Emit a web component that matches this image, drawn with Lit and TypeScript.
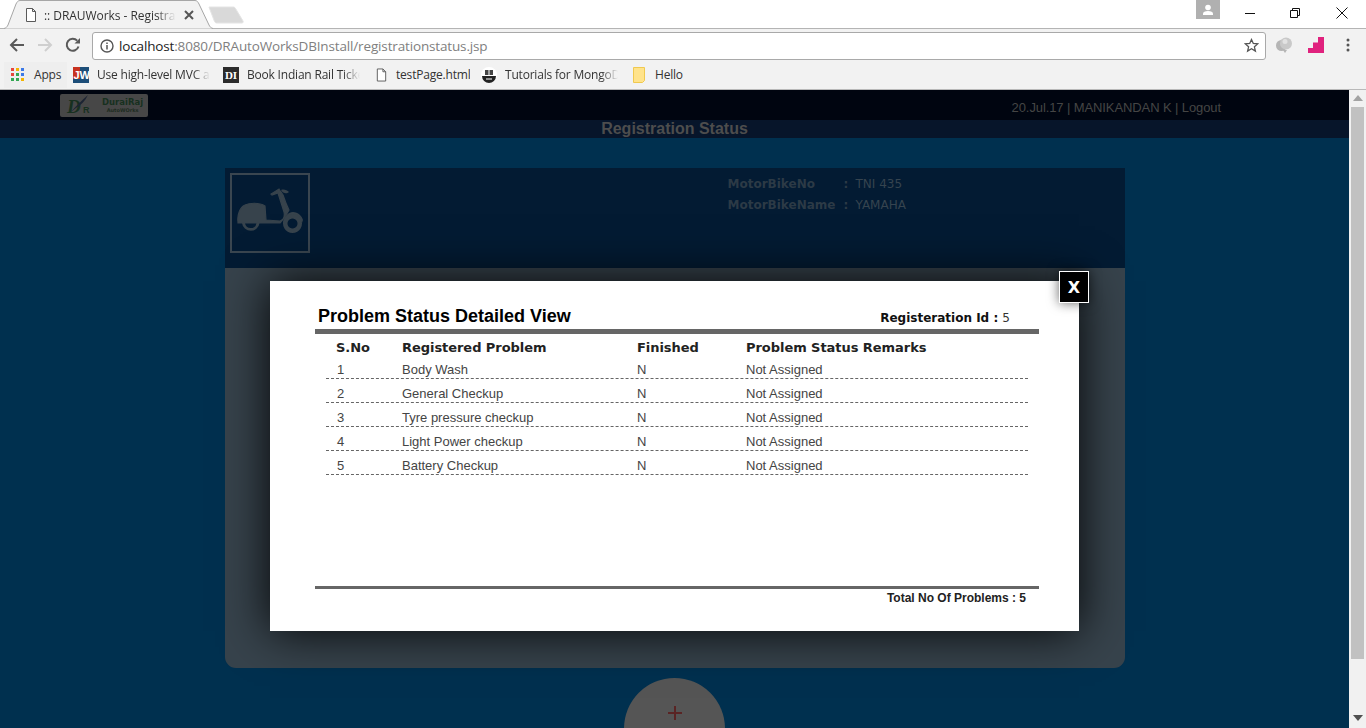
import { LitElement, css, html, svg } from "lit";
import { customElement } from "lit/decorators.js";

const problems = [
  "Body Wash",
  "General Checkup",
  "Tyre pressure checkup",
  "Light Power checkup",
  "Battery Checkup",
];

const docIcon = svg`<path d="M2.5 1.5h6l3 3v10h-9z M8.5 1.5v3h3" fill="#fff" stroke="#5a5a5a" stroke-width="1"/>`;

const appColors = ["#e8453c", "#f4b400", "#3b78e7", "#e8453c", "#34a853", "#3b78e7", "#34a853", "#34a853", "#f4b400"];

const bookmarks = [
  { label: "Use high-level MVC and", icon: "jw", width: 113, gap: 8, after: 13, fade: true },
  { label: "Book Indian Rail Tickets", icon: "di", width: 113, gap: 8, after: 15, fade: true },
  { label: "testPage.html", icon: "doc", width: 74, gap: 8, after: 11, fade: false },
  { label: "Tutorials for MongoDB", icon: "mongo", width: 113, gap: 8, after: 15, fade: true },
  { label: "Hello", icon: "note", width: 30, gap: 10, after: 0, fade: false },
];

@customElement("app-root")
export class AppRoot extends LitElement {
  static styles = css`
    :host {
      display: block;
      height: 728px;
      overflow: hidden;
      font-family: "Liberation Sans", Arial, sans-serif;
      position: relative;
    }
    svg {
      display: block;
      flex: none;
    }
    .tabstrip {
      height: 28px;
      background: #fff;
      border-bottom: 1px solid #b4b4b4;
      display: flex;
      position: relative;
      box-sizing: content-box;
    }
    .tab-bg {
      position: absolute;
      left: 0;
      top: 0;
    }
    .new-tab {
      position: absolute;
      left: 208px;
      top: 6px;
    }
    .tab {
      position: relative;
      display: flex;
      align-items: center;
      margin-left: 24px;
      width: 172px;
      height: 30px;
      font: 12px "Open Sans", sans-serif;
      letter-spacing: -0.05px;
      color: #333;
    }
    .tab-title {
      margin-left: 6px;
      width: 132px;
      overflow: hidden;
      white-space: nowrap;
      -webkit-mask-image: linear-gradient(90deg, #000 85%, transparent);
      mask-image: linear-gradient(90deg, #000 85%, transparent);
    }
    .tab-close {
      margin-left: 8px;
    }
    .win {
      position: absolute;
      right: 1px;
      top: 0;
      display: flex;
    }
    .avatar {
      position: absolute;
      left: 1196px;
      top: 0;
      width: 24px;
      height: 19px;
      background: #b0b0b0;
      display: flex;
      justify-content: center;
      align-items: center;
    }
    .win-btn {
      width: 46px;
      height: 26px;
      display: flex;
      align-items: center;
      justify-content: center;
    }
    .toolbar {
      height: 31px;
      background: #f2f2f2;
      display: flex;
      align-items: center;
      padding-left: 9px;
    }
    .nav {
      width: 28px;
      display: flex;
      justify-content: flex-start;
    }
    .omnibox {
      margin-left: -1px;
      width: 1172px;
      height: 26px;
      background: #fff;
      border: 1px solid #a9a9a9;
      border-radius: 3px;
      display: flex;
      align-items: center;
      font: 13.5px "Open Sans", sans-serif;
      letter-spacing: -0.15px;
      color: #808080;
      position: relative;
      top: 1px;
    }
    .omnibox .info {
      margin: 0 5px 0 7px;
    }
    .omnibox b {
      font-weight: 400;
      color: #222;
    }
    .omnibox .star {
      margin-left: auto;
      margin-right: 6px;
    }
    .exts {
      display: flex;
      align-items: center;
      margin-left: 9px;
    }
    .ext-pink {
      margin-left: 15px;
    }
    .ext-menu {
      margin-left: 22px;
    }
    .bookmarks {
      height: 29px;
      background: #f2f2f2;
      border-bottom: 1px solid #b9b9b9;
      display: flex;
      align-items: center;
      padding-left: 4px;
      font: 12px "Open Sans", sans-serif;
      letter-spacing: -0.2px;
      color: #333;
    }
    .bm-apps {
      width: 63px;
      height: 26px;
      box-sizing: border-box;
      background: #eeeeee;
      display: flex;
      align-items: center;
      padding-left: 7px;
      gap: 10px;
      margin-right: 6px;
    }
    .bm {
      display: flex;
      align-items: center;
    }
    .bm-label {
      overflow: hidden;
      white-space: nowrap;
    }
    .bm-label.fade {
      -webkit-mask-image: linear-gradient(90deg, #000 85%, transparent);
      mask-image: linear-gradient(90deg, #000 85%, transparent);
    }
    .page {
      height: 638px;
      display: flex;
      position: relative;
    }
    .main {
      flex: 1;
      background: #00304f;
      overflow: hidden;
    }
    .scrollbar {
      width: 17px;
      background: #f1f1f1;
      display: flex;
      flex-direction: column;
      align-items: center;
    }
    .scroll-up {
      margin-top: 5px;
    }
    .thumb {
      margin-top: 6px;
      width: 13px;
      height: 552px;
      background: #c1c1c1;
    }
    .scroll-down {
      margin-top: auto;
      margin-bottom: 7px;
    }
    .top {
      height: 30px;
      background: #000510;
      display: flex;
      align-items: flex-start;
      justify-content: space-between;
      padding: 0 128px 0 60px;
      font-size: 13px;
      letter-spacing: -0.1px;
      color: #454545;
    }
    .top-right {
      margin-top: 10px;
    }
    .logo {
      width: 88px;
      height: 23px;
      margin-top: 4px;
      box-sizing: border-box;
      background: #474747;
      border-radius: 2px;
      display: flex;
      align-items: center;
      color: #17301f;
      font-family: "DejaVu Sans", sans-serif;
      font-weight: 700;
      letter-spacing: 0;
    }
    .logo-text {
      margin-left: 12px;
      text-align: center;
      font-size: 8.5px;
      line-height: 10px;
    }
    .logo-text small {
      display: block;
      font-size: 5px;
      line-height: 7px;
      color: #1d2b20;
    }
    .subtitle {
      height: 18px;
      background: #07152a;
      display: flex;
      align-items: center;
      justify-content: center;
      font-size: 16px;
      font-weight: 700;
      color: #4d4d4d;
    }
    .card {
      width: 900px;
      margin: 30px auto 0;
      height: 500px;
      background: #37434c;
      border-radius: 0 0 11px 11px;
    }
    .card-top {
      height: 100px;
      background: #031b33;
      padding: 5px;
      box-sizing: border-box;
      display: flex;
    }
    .bike {
      width: 80px;
      height: 80px;
      box-sizing: border-box;
      border: 2px solid #3a4650;
    }
    .bike-info {
      margin: 0 0 0 418px;
      display: grid;
      grid-template-columns: 116px 12px auto;
      grid-auto-rows: 21px;
      align-items: center;
      font: 700 12px "DejaVu Sans", sans-serif;
      color: #2c3a46;
      white-space: nowrap;
    }
    .bike-info .value {
      font-weight: 400;
      color: #36444f;
    }
    .fab {
      width: 101px;
      height: 101px;
      margin: 10px auto 0;
      border-radius: 50%;
      background: #555;
      display: flex;
      justify-content: center;
      padding-top: 28px;
      box-sizing: border-box;
    }
    .modal {
      position: absolute;
      left: 270px;
      top: 191px;
      width: 809px;
      height: 350px;
      box-sizing: border-box;
      background: #fff;
      box-shadow: 0 0 45px rgba(0, 0, 0, 0.95);
      padding: 0 40px 0 45px;
      display: flex;
      flex-direction: column;
    }
    .close {
      position: absolute;
      left: 789px;
      top: -10px;
      width: 30px;
      height: 32px;
      box-sizing: border-box;
      background: #000;
      border: 1px solid #fff;
      box-shadow: 0 0 12px rgba(0, 0, 0, 0.6);
      color: #fff;
      font: 700 16px "DejaVu Sans", sans-serif;
      display: flex;
      align-items: center;
      justify-content: center;
    }
    .modal-head {
      height: 53px;
      box-sizing: border-box;
      border-bottom: 5px solid #666;
      display: flex;
      align-items: flex-end;
      justify-content: space-between;
      padding: 0 29px 2px 3px;
    }
    .modal-title {
      font-size: 18px;
      font-weight: 700;
      color: #000;
    }
    .reg-id {
      font: 700 12px "DejaVu Sans", sans-serif;
      color: #111;
      padding-bottom: 2px;
    }
    .reg-id span {
      font-weight: 400;
      color: #333;
    }
    .rows {
      margin: 0 11px;
    }
    .row {
      display: grid;
      grid-template-columns: 76px 235px 109px 1fr;
      height: 24px;
      box-sizing: border-box;
      align-items: center;
      padding-top: 5px;
      border-bottom: 1px dashed #666;
      font-size: 13px;
      color: #444;
    }
    .row > span:first-child {
      padding-left: 11px;
    }
    .row.head {
      height: 21px;
      padding-top: 5px;
      border-bottom: none;
      font: 700 13px "DejaVu Sans", sans-serif;
      letter-spacing: -0.05px;
      color: #222;
    }
    .row.head > span:first-child {
      padding-left: 10px;
    }
    .modal-foot {
      margin-top: auto;
      height: 45px;
      box-sizing: border-box;
      border-top: 3px solid #666;
      padding: 2px 13px 0 0;
      text-align: right;
      font-size: 12px;
      font-weight: 700;
      color: #222;
    }
  `;

  private _bmIcon(kind: string) {
    switch (kind) {
      case "jw":
        return html`<svg width="16" height="16" viewBox="0 0 16 16">
          <rect width="16" height="16" fill="#1d4e79"/>
          <rect width="7" height="12" fill="#c8321f"/>
          <text x="0.5" y="12" font-family="Liberation Sans" font-weight="700" font-size="11" fill="#fff">JW</text>
        </svg>`;
      case "di":
        return html`<svg width="16" height="16" viewBox="0 0 16 16">
          <rect width="16" height="16" fill="#2b2b2b"/>
          <text x="8" y="12" text-anchor="middle" font-family="Liberation Serif" font-weight="700" font-size="11" fill="#fff">DI</text>
        </svg>`;
      case "doc":
        return html`<svg width="13" height="16" viewBox="0 0 14 16">${docIcon}</svg>`;
      case "mongo":
        return html`<svg width="16" height="16" viewBox="0 0 16 16">
          <circle cx="8" cy="8" r="8" fill="#fff"/>
          <path d="M1 9h14a7 7 0 0 1-14 0z" fill="#222"/>
          <path d="M4 3h8v5H4z" fill="#444"/>
          <path d="M8 3v5M5 12h6" stroke="#fff"/>
        </svg>`;
      default:
        return html`<svg width="12" height="16" viewBox="0 0 12 16">
          <path d="M.5.5h11v13l-2 2H.5z" fill="#ffe38b" stroke="#f0c94f"/>
        </svg>`;
    }
  }

  private _chrome() {
    return html`
      <div class="tabstrip">
        <svg class="tab-bg" width="216" height="30" viewBox="0 0 216 30">
          <path d="M4 28.500C6 28 7 27 8 25L16 4C17 2 18 .5 20 .5H195C197 .5 198 2 199 4L209 25C210 27 211 28 213 28.500" fill="#f2f2f2" stroke="#a6a6a6"/>
        </svg>
        <svg class="new-tab" width="36" height="19" viewBox="0 0 36 19">
          <path d="M1 1h24c1 0 2 .5 2.500 1.500L35 15c.5 1 0 2-1 2H9c-1 0-2-.5-2.500-1.500z" fill="#d9d9d9" stroke="#e4e4e4"/>
        </svg>
        <div class="tab">
          <svg width="14" height="16" viewBox="0 0 14 16">${docIcon}</svg>
          <span class="tab-title">:: DRAUWorks - Registration</span>
          <svg class="tab-close" width="10" height="10" viewBox="0 0 10 10">
            <path d="M1 1l8 8M9 1l-8 8" stroke="#555" stroke-width="2"/>
          </svg>
        </div>
        <div class="avatar">
          <svg width="12" height="12" viewBox="0 0 12 12">
            <circle cx="6" cy="3.500" r="2.800" fill="#fff"/>
            <path d="M1 11V9.500C1 8 3 7 6 7s5 1 5 2.500V11z" fill="#fff"/>
          </svg>
        </div>
        <div class="win">
          <div class="win-btn">
            <svg width="12" height="12" viewBox="0 0 12 12"><path d="M1 6.500h10" stroke="#111"/></svg>
          </div>
          <div class="win-btn">
            <svg width="12" height="12" viewBox="0 0 12 12">
              <path d="M.5 3.500h7v7h-7z M2.500 3.500v-2h7v7h-2" fill="none" stroke="#111"/>
            </svg>
          </div>
          <div class="win-btn">
            <svg width="12" height="12" viewBox="0 0 12 12"><path d="M.5.500l11 11M11.500.500l-11 11" stroke="#111"/></svg>
          </div>
        </div>
      </div>
      <div class="toolbar">
        <div class="nav">
          <svg width="16" height="16" viewBox="0 0 16 16">
            <path d="M15 8H2.500M8 2L2 8l6 6" fill="none" stroke="#5a5a5a" stroke-width="2"/>
          </svg>
        </div>
        <div class="nav">
          <svg width="16" height="16" viewBox="0 0 16 16">
            <path d="M1 8h12.500M8 2l6 6-6 6" fill="none" stroke="#cfcfcf" stroke-width="2"/>
          </svg>
        </div>
        <div class="nav">
          <svg width="16" height="16" viewBox="0 0 16 16">
            <path d="M13.500 9.500A6 6 0 1 1 12.200 3.700" fill="none" stroke="#5a5a5a" stroke-width="2"/>
            <path d="M9.500 6.500H15V1z" fill="#5a5a5a"/>
          </svg>
        </div>
        <div class="omnibox">
          <svg class="info" width="14" height="14" viewBox="0 0 14 14">
            <circle cx="7" cy="7" r="6" fill="none" stroke="#555" stroke-width="1.400"/>
            <path d="M7 6v4.500M7 3.500v1.500" stroke="#555" stroke-width="1.500"/>
          </svg>
          <span><b>localhost</b>:8080/DRAutoWorksDBInstall/registrationstatus.jsp</span>
          <svg class="star" width="15" height="15" viewBox="0 0 15 15">
            <path d="M7.500 1.500l1.800 4 4.400.4-3.300 2.900 1 4.300-3.900-2.300-3.900 2.300 1-4.300L1.300 5.900l4.400-.4z" fill="none" stroke="#555" stroke-width="1.300"/>
          </svg>
        </div>
        <div class="exts">
          <svg width="18" height="16" viewBox="0 0 18 16">
            <circle cx="6.500" cy="8.500" r="5.500" fill="#b5b5b5"/>
            <circle cx="11" cy="6.500" r="6" fill="#c9c9c9"/>
            <circle cx="10" cy="4.500" r="2.500" fill="#e2e2e2"/>
            <path d="M8 13l2 3 2-3z" fill="#b5b5b5"/>
          </svg>
          <svg class="ext-pink" width="16" height="16" viewBox="0 0 16 16">
            <path d="M0 16v-5h5V5.500h5V0h6v16z" fill="#e0227e"/>
          </svg>
          <svg class="ext-menu" width="4" height="14" viewBox="0 0 4 14">
            <circle cx="2" cy="2" r="1.500" fill="#555"/>
            <circle cx="2" cy="7" r="1.500" fill="#555"/>
            <circle cx="2" cy="12" r="1.500" fill="#555"/>
          </svg>
        </div>
      </div>
      <div class="bookmarks">
        <div class="bm-apps">
          <svg width="13" height="13" viewBox="0 0 13 13">
            ${appColors.map(
              (c, i) => svg`<rect x=${(i % 3) * 5} y=${Math.floor(i / 3) * 5} width="3" height="3" fill=${c}/>`
            )}
          </svg>
          <span>Apps</span>
        </div>
        ${bookmarks.map(
          (b) => html`<div class="bm" style="margin-right:${b.after}px">
            ${this._bmIcon(b.icon)}
            <span class="bm-label ${b.fade ? "fade" : ""}" style="width:${b.width}px;margin-left:${b.gap}px">${b.label}</span>
          </div>`
        )}
      </div>
    `;
  }

  render() {
    return html`
      ${this._chrome()}
      <div class="page">
        <div class="main">
          <div class="top">
            <div class="logo">
              <svg width="30" height="23" viewBox="0 0 30 23">
                <text x="7" y="19" font-family="Liberation Serif" font-style="italic" font-weight="700" font-size="19" fill="#17301f">D</text>
                <path d="M11 18C16 12 22 6 28 1c-3 6-7 10-12 13z" fill="#1c2433"/>
                <text x="23" y="19" font-family="Liberation Sans" font-size="9" font-weight="700" fill="#17301f">R</text>
              </svg>
              <div class="logo-text">DuraiRaj<small>AutoWOrks</small></div>
            </div>
            <div class="top-right">20.Jul.17 | MANIKANDAN K | Logout</div>
          </div>
          <div class="subtitle">Registration Status</div>
          <div class="card">
            <div class="card-top">
              <div class="bike">
                <svg width="76" height="76" viewBox="0 0 76 76" fill="#37434c">
                  <path d="M6 47C5 40 8 32 13 30c4-2 14-3 20 1l1 14 14 1c3-1 5-4 4-9l-6-19-6 2-1-1 8-5 1 2 1 1 2 3c3 9 6 15 6 15-2 4-5 9-9 13H6z" stroke="#37434c" stroke-width="1.200"/>
                  <path d="M49 15c3-1 6 0 8 2-2 2-6 2-8-2z"/>
                  <path d="M51 49c0-7 5-12 10-12 5 0 9 4 10 8l-1 3c-2-4-5-6-9-6-4 0-7 3-8 7z"/>
                  <path d="M10 48a8.800 8.800 0 0 0 17.500 0h-3a5.800 5.800 0 0 1-11.500 0z"/>
                  <path d="M60.500 39a9.500 9.500 0 1 0 .01 0zm0 4.500a5 5 0 1 1-.01 0z" fill-rule="evenodd"/>
                </svg>
              </div>
              <div class="bike-info">
                <span>MotorBikeNo</span><span>:</span><span class="value">TNI 435</span>
                <span>MotorBikeName</span><span>:</span><span class="value">YAMAHA</span>
              </div>
            </div>
          </div>
          <div class="fab">
            <svg width="14" height="14" viewBox="0 0 14 14">
              <path d="M7 0v14M0 7h14" stroke="#5a2424" stroke-width="2"/>
            </svg>
          </div>
        </div>
        <div class="scrollbar">
          <svg class="scroll-up" width="10" height="6" viewBox="0 0 10 6"><path d="M5 0l5 6H0z" fill="#a3a3a3"/></svg>
          <div class="thumb"></div>
          <svg class="scroll-down" width="10" height="6" viewBox="0 0 10 6"><path d="M0 0h10L5 6z" fill="#505050"/></svg>
        </div>
        <div class="modal">
          <div class="close">X</div>
          <div class="modal-head">
            <div class="modal-title">Problem Status Detailed View</div>
            <div class="reg-id">Registeration Id : <span>5</span></div>
          </div>
          <div class="rows">
            <div class="row head">
              <span>S.No</span><span>Registered Problem</span><span>Finished</span><span>Problem Status Remarks</span>
            </div>
            ${problems.map(
              (p, i) => html`<div class="row">
                <span>${i + 1}</span><span>${p}</span><span>N</span><span>Not Assigned</span>
              </div>`
            )}
          </div>
          <div class="modal-foot">Total No Of Problems : 5</div>
        </div>
      </div>
    `;
  }
}
